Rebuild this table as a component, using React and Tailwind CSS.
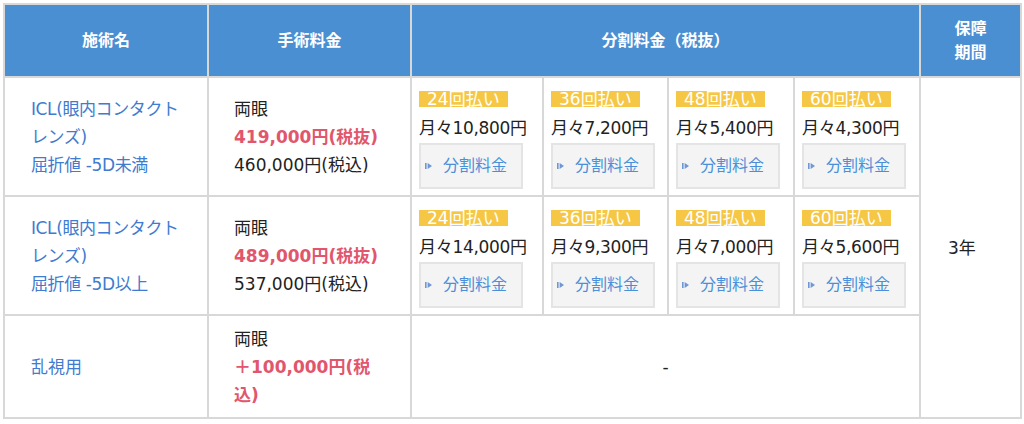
import React from 'react';

const rows = [
    {
        name: ['ICL(眼内コンタクト', 'レンズ)', '屈折値 -5D未満'],
        exTax: '419,000円(税抜)',
        inTax: '460,000円(税込)',
        monthly: ['10,800', '7,200', '5,400', '4,300'],
    },
    {
        name: ['ICL(眼内コンタクト', 'レンズ)', '屈折値 -5D以上'],
        exTax: '489,000円(税抜)',
        inTax: '537,000円(税込)',
        monthly: ['14,000', '9,300', '7,000', '5,600'],
    },
];

const counts = ['24', '36', '48', '60'];

const font = { fontFamily: '"DejaVu Sans", "Noto Sans CJK JP", sans-serif' };

const PlayIcon = () => (
    <svg width="7" height="6" viewBox="0 0 7 6" className="shrink-0">
        <rect x="0" y="0" width="1.6" height="6" fill="#6f97d2" />
        <polygon points="2.6,0 7,3 2.6,6" fill="#6f97d2" />
    </svg>
);

const Installment = ({ count, amount }) => (
    <td className="border-2 border-[#d8d8d8] align-top pl-[7px] pr-1 pt-[13px] pb-[6px]">
        <div className="w-fit h-4 leading-4 px-2 bg-[#f6c745] text-white text-[17px] whitespace-nowrap">
            {count}回払い
        </div>
        <div className="mt-[7px] text-[17px] leading-[28px] text-[#222] whitespace-nowrap tracking-[-0.3px]">月々{amount}円</div>
        <div className="mt-[1px] w-[104px] h-[46px] flex items-center gap-[11px] pl-[4px] bg-[#f4f4f4] border-2 border-[#e4e4e4]">
            <PlayIcon />
            <span className="text-[16px] text-[#4a8fd9]">分割料金</span>
        </div>
    </td>
);

export default function App() {
    return (
        <div className="bg-white w-[1024px] h-[424px] pl-[3px] pt-[3px]" style={font}>
            <table className="table-fixed border-collapse w-[1017px] text-[17px] leading-[28px]">
                <colgroup>
                    <col className="w-[204px]" />
                    <col className="w-[203px]" />
                    <col className="w-[132px]" />
                    <col className="w-[125px]" />
                    <col className="w-[126px]" />
                    <col className="w-[126px]" />
                    <col className="w-[101px]" />
                </colgroup>
                <thead>
                    <tr className="h-[73px] bg-[#4b8fd3] text-white text-[16px] leading-6 font-bold">
                        <th className="border-2 border-[#d8d8d8] font-bold">施術名</th>
                        <th className="border-2 border-[#d8d8d8] font-bold">手術料金</th>
                        <th colSpan={4} className="border-2 border-[#d8d8d8] font-bold">分割料金（税抜）</th>
                        <th className="border-2 border-[#d8d8d8] font-bold px-[27px]">保障期間</th>
                    </tr>
                </thead>
                <tbody>
                    {rows.map((row, i) => (
                        <tr key={i}>
                            <td className="border-2 border-[#d8d8d8] align-middle pl-[26px] text-[#3f7bd0] whitespace-nowrap tracking-[-0.4px]">
                                {row.name.map((line) => (
                                    <span key={line} className="block">{line}</span>
                                ))}
                            </td>
                            <td className="border-2 border-[#d8d8d8] align-middle pl-[25px] text-[#222] whitespace-nowrap">
                                <span className="block">両眼</span>
                                <span className="block font-bold text-[#e1566c]">{row.exTax}</span>
                                <span className="block">{row.inTax}</span>
                            </td>
                            {row.monthly.map((m, j) => (
                                <Installment key={j} count={counts[j]} amount={m} />
                            ))}
                            {i === 0 && (
                                <td rowSpan={3} className="border-2 border-[#d8d8d8] align-middle pl-[27px] text-[#222]">
                                    3年
                                </td>
                            )}
                        </tr>
                    ))}
                    <tr className="h-[103px]">
                        <td className="border-2 border-[#d8d8d8] align-middle pl-[26px] text-[#3f7bd0]">乱視用</td>
                        <td className="border-2 border-[#d8d8d8] align-middle pl-[25px] text-[#222] whitespace-nowrap">
                            <span className="block">両眼</span>
                            <span className="block font-bold text-[#e1566c]">＋100,000円(税</span>
                            <span className="block font-bold text-[#e1566c]">込)</span>
                        </td>
                        <td colSpan={4} className="border-2 border-[#d8d8d8] align-middle text-center text-[#222]">-</td>
                    </tr>
                </tbody>
            </table>
        </div>
    );
}
